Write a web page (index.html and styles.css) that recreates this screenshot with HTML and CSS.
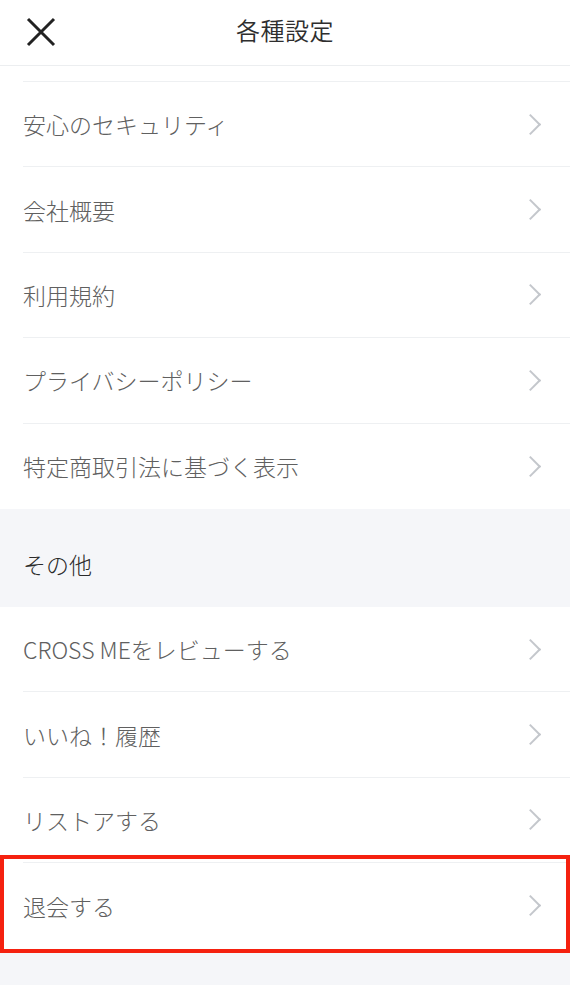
FILE: index.html
```html
<!DOCTYPE html>
<html lang="ja">
<head>
  <meta charset="UTF-8">
  <meta name="viewport" content="width=device-width, initial-scale=1.0">
  <link rel="stylesheet" href="styles.css">
</head>
<body>
<div id="settings">
  <header class="top-bar">
    <button class="close-btn" aria-label="閉じる">
      <svg width="30" height="30" viewBox="0 0 30 30">
        <path d="M2 2 L28 28 M28 2 L2 28" stroke="#222" stroke-width="3" fill="none"/>
      </svg>
    </button>
    <h1 class="title">各種設定</h1>
  </header>

  <ul class="menu">
    <li class="menu-item partial"></li>
    <li class="menu-item"><span>安心のセキュリティ</span><i class="chevron"></i></li>
    <li class="menu-item"><span>会社概要</span><i class="chevron"></i></li>
    <li class="menu-item"><span>利用規約</span><i class="chevron"></i></li>
    <li class="menu-item"><span>プライバシーポリシー</span><i class="chevron"></i></li>
    <li class="menu-item last"><span>特定商取引法に基づく表示</span><i class="chevron"></i></li>
  </ul>

  <div class="section-title">その他</div>

  <ul class="menu">
    <li class="menu-item"><span>CROSS MEをレビューする</span><i class="chevron"></i></li>
    <li class="menu-item"><span>いいね！履歴</span><i class="chevron"></i></li>
    <li class="menu-item"><span>リストアする</span><i class="chevron"></i></li>
    <li class="menu-item last marked"><span>退会する</span><i class="chevron"></i></li>
  </ul>

  <div class="footer-space"></div>
</div>
</body>
</html>
```

FILE: styles.css
```css
body {
  font-family: "Noto Sans CJK JP", "Noto Sans", sans-serif;
  background-color: #f5f6f9;
  margin: 0;
  padding: 0;
  width: 570px;
  height: 985px;
  overflow: hidden;
}

.top-bar {
  position: relative;
  height: 66px;
  box-sizing: border-box;
  padding-bottom: 6px;
  background-color: #fff;
  border-bottom: 1px solid #eceef0;
  display: flex;
  align-items: center;
  justify-content: center;
}

.close-btn {
  position: absolute;
  left: 26px;
  top: 17px;
  padding: 0;
  border: none;
  background: none;
  width: 30px;
  height: 30px;
}

.close-btn svg {
  display: block;
}

.title {
  margin: 0;
  font-size: 24px;
  font-weight: 350;
  color: #2e2e2e;
  letter-spacing: 0.5px;
}

.menu {
  list-style: none;
  margin: 0;
  padding: 0;
  background-color: #fff;
}

.menu-item {
  height: 85.4px;
  box-sizing: border-box;
  margin-left: 23px;
  padding-right: 32px;
  border-bottom: 1px solid #eef0f2;
  display: flex;
  align-items: center;
  justify-content: space-between;
  font-size: 23px;
  font-weight: 300;
  color: #606060;
}

.menu-item.partial {
  height: 16px;
}

.menu-item.last {
  border-bottom: none;
}

.chevron {
  display: block;
  width: 13px;
  height: 13px;
  border-top: 2px solid #c4c7cc;
  border-right: 2px solid #c4c7cc;
  transform: rotate(45deg);
}

.menu-item.marked {
  position: relative;
}

.menu-item.marked::after {
  content: "";
  position: absolute;
  top: -8px;
  bottom: -4px;
  left: -23px;
  right: 0;
  border: 4px solid #f5210f;
}

.section-title {
  height: 98px;
  box-sizing: border-box;
  padding: 12px 0 0 23px;
  display: flex;
  align-items: center;
  font-size: 23px;
  font-weight: 300;
  color: #2a2a2a;
  background-color: #f5f6f9;
}

.footer-space {
  height: 40px;
}
```
